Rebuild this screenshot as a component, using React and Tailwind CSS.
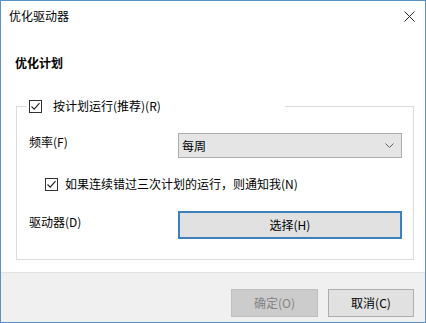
import React from "react";

const font = { fontFamily: '"Noto Sans CJK SC", "Liberation Sans", sans-serif' };

function CheckBox() {
  return (
    <svg width="13" height="13" viewBox="0 0 13 13" className="shrink-0">
      <rect x="0.5" y="0.5" width="12" height="12" fill="#fff" stroke="#333" />
      <path d="M2.5 6.5 L5.2 9.2 L10.5 3.2" fill="none" stroke="#222" strokeWidth="1.1" />
    </svg>
  );
}

function App() {
  return (
    <div
      className="w-[426px] h-[323px] border border-[#5a92c6] bg-white flex flex-col text-[12px] leading-[16px] text-black"
      style={font}
    >
      {/* title bar */}
      <div className="h-[30px] flex items-center justify-between pl-[8px] pr-[10px]">
        <span>优化驱动器</span>
        <svg width="11" height="11" viewBox="0 0 11 11">
          <path d="M0.5 0.5 L10.5 10.5 M10.5 0.5 L0.5 10.5" stroke="#222" strokeWidth="1" />
        </svg>
      </div>

      <div className="flex-1 pl-[15px]">
        <p className="mt-[24px] -ml-[1px] font-bold">优化计划</p>

        <fieldset className="mt-[27px] w-[398px] border border-[#dcdcdc] pl-[12px] pr-[10px] pb-[20px]">
          <legend className="-ml-[2px] w-[258px] px-[2px] h-[16px] flex items-center">
            <CheckBox />
            <span className="ml-[11px]">按计划运行(推荐)(R)</span>
          </legend>

          <div className="mt-[19px] flex items-start">
            <span className="w-[149px] mt-[1px]">频率(F)</span>
            <div className="w-[224px] h-[25px] border border-[#adadad] bg-[#e5e5e5] flex items-center justify-between pl-[3px] pr-[7px]">
              <span>每周</span>
              <svg width="9" height="5" viewBox="0 0 9 5">
                <path d="M0.5 0.5 L4.5 4.5 L8.5 0.5" fill="none" stroke="#606060" strokeWidth="1" />
              </svg>
            </div>
          </div>

          <div className="mt-[18px] ml-[16px] flex items-center">
            <CheckBox />
            <span className="ml-[7px]">如果连续错过三次计划的运行，则通知我(N)</span>
          </div>

          <div className="mt-[19px] flex items-start">
            <span className="w-[149px] mt-[3px]">驱动器(D)</span>
            <button className="w-[224px] h-[28px] border-2 border-[#3f80ba] bg-[#e1e1e1] flex items-center justify-center">
              选择(H)
            </button>
          </div>
        </fieldset>
      </div>

      {/* footer */}
      <div className="h-[50px] bg-[#f0f0f0] border-t border-[#e3e3e3] flex items-start justify-end gap-[10px] pt-[16px] pr-[11px]">
        <button className="w-[87px] h-[28px] border border-[#bfbfbf] bg-[#cccccc] text-[#838383]">
          确定(O)
        </button>
        <button className="w-[86px] h-[28px] border border-[#adadad] bg-[#e1e1e1]">
          取消(C)
        </button>
      </div>
    </div>
  );
}

export default App;
